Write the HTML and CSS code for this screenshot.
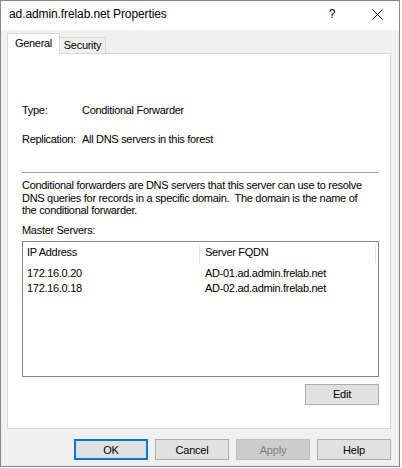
FILE: index.html
```html
<!DOCTYPE html>
<html>
<head>
<meta charset="utf-8">
<link rel="stylesheet" href="styles.css">
</head>
<body>
<div class="window">
  <div class="titlebar">
    <span class="title">ad.admin.frelab.net Properties</span>
    <span class="help-q">?</span>
    <span class="close">
      <svg width="11" height="11" viewBox="0 0 11 11"><path d="M0.5 0.5 L10.5 10.5 M10.5 0.5 L0.5 10.5" stroke="#000" stroke-width="1" fill="none"/></svg>
    </span>
  </div>
  <div class="body">
    <div class="tabs">
      <div class="tab active">General</div>
      <div class="tab">Security</div>
    </div>
    <div class="panel">
      <div class="field"><span class="label">Type:</span><span>Conditional Forwarder</span></div>
      <div class="field"><span class="label">Replication:</span><span>All DNS servers in this forest</span></div>
      <hr class="sep">
      <p class="desc">Conditional forwarders are DNS servers that this server can use to resolve DNS queries for records in a specific domain.&nbsp; The domain is the name of the conditional forwarder.</p>
      <div class="ms-label">Master Servers:</div>
      <div class="list">
        <div class="row head"><span class="c1">IP Address</span><span class="c2">Server FQDN</span></div>
        <div class="row"><span class="c1">172.16.0.20</span><span class="c2">AD-01.ad.admin.frelab.net</span></div>
        <div class="row"><span class="c1">172.16.0.18</span><span class="c2">AD-02.ad.admin.frelab.net</span></div>
      </div>
      <div class="edit-row"><button class="btn">Edit</button></div>
    </div>
    <div class="buttons">
      <button class="btn default">OK</button>
      <button class="btn">Cancel</button>
      <button class="btn disabled">Apply</button>
      <button class="btn">Help</button>
    </div>
  </div>
</div>
</body>
</html>
```
FILE: styles.css
```css
html, body {
  margin: 0;
  padding: 0;
  background: #ffffff;
}
body {
  font-family: "Liberation Sans", Arial, sans-serif;
  font-size: 11px;
  letter-spacing: -0.3px;
  color: #000;
}
.window {
  width: 398px;
  height: 465px;
  border: 1px solid #858585;
  background: #f0f0f0;
  display: flex;
  flex-direction: column;
}
.titlebar {
  height: 29px;
  background: #fff;
  display: flex;
  align-items: center;
}
.title {
  font-size: 12px;
  letter-spacing: -0.1px;
  margin-left: 8px;
  flex: 1;
  padding-bottom: 3px;
}
.help-q {
  font-size: 12px;
  width: 8px;
  text-align: center;
  margin-right: 36px;
  padding-bottom: 3px;
}
.close {
  width: 11px;
  height: 11px;
  margin-right: 16px;
  display: flex;
  margin-bottom: 3px;
}
.body {
  flex: 1;
  display: flex;
  flex-direction: column;
  padding: 3px 8px 0 6px;
}
.tabs {
  display: flex;
  height: 20px;
  align-items: flex-end;
  position: relative;
  z-index: 1;
}
.tab {
  border: 1px solid #d9d9d9;
  border-bottom: none;
  background: #f0f0f0;
  height: 15px;
  line-height: 15px;
  box-sizing: content-box;
  width: 45px;
  border-left: none;
  text-align: center;
}
.tab.active {
  background: #fff;
  border-left: 1px solid #d9d9d9;
  height: 20px;
  line-height: 19px;
  width: 51px;
  margin-bottom: -1px;
}
.panel {
  border: 1px solid #d9d9d9;
  background: #fff;
  height: 376px;
  padding: 50px 11px 0 14px;
  box-sizing: border-box;
  width: 384px;
}
.field {
  display: flex;
  height: 13px;
  line-height: 13px;
  margin-bottom: 16px;
}
.label {
  width: 60px;
}
.sep {
  border: none;
  border-top: 1px solid #a0a0a0;
  margin: 26px 0 6px 0;
  height: 0;
}
.desc {
  margin: 0;
  line-height: 12.5px;
  width: 350px;
}
.ms-label {
  margin-top: 7px;
  line-height: 13px;
}
.list {
  margin-top: 4px;
  border: 1px solid #828790;
  height: 136px;
  box-sizing: border-box;
  width: 357px;
}
.row {
  display: flex;
  height: 15px;
  line-height: 15px;
}
.row.head {
  height: 24px;
  line-height: 20px;
}
.c1 {
  width: 177px;
  padding-left: 4px;
  box-sizing: border-box;
}
.row.head .c1 {
  border-right: 1px solid #e5e5e5;
  height: 19px;
  margin-top: 2px;
  line-height: 17px;
}
.row.head .c2 {
  width: 176px;
  border-right: 1px solid #e5e5e5;
  height: 19px;
  margin-top: 2px;
  line-height: 17px;
}
.c2 {
  padding-left: 5px;
  box-sizing: border-box;
}
.edit-row {
  display: flex;
  justify-content: flex-end;
  margin-top: 7px;
  width: 357px;
}
.btn {
  font-family: "Liberation Sans", Arial, sans-serif;
  font-size: 11px;
  letter-spacing: -0.2px;
  width: 74px;
  height: 21px;
  background: #e1e1e1;
  border: 1px solid #adadad;
  color: #000;
  padding: 0;
  margin: 0;
}
.btn.default {
  border: 2px solid #0078d7;
}
.btn.disabled {
  background: #cccccc;
  border-color: #bfbfbf;
  color: #838383;
}
.buttons {
  display: flex;
  justify-content: flex-end;
  gap: 7px;
  margin-top: 10px;
}
```
